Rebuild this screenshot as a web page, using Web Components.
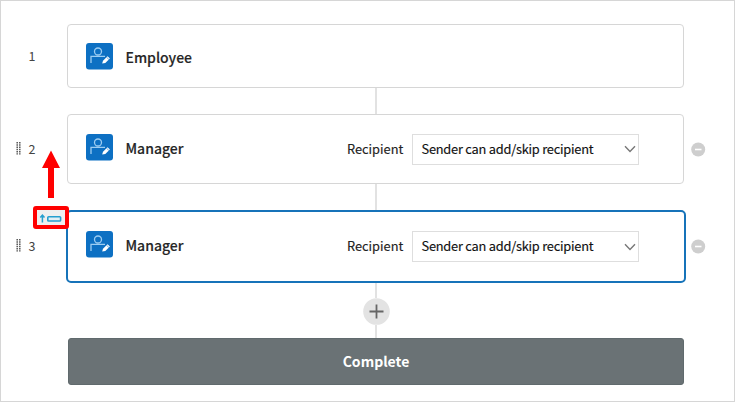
<!DOCTYPE html>
<html lang="en"><head><meta charset="utf-8"><title>Workflow</title>
<style>html,body{margin:0;background:#fff}</style></head><body>
<workflow-board></workflow-board>
<script>
const define=(name,html,setup)=>customElements.define(name,class extends HTMLElement{
  constructor(){super();this.attachShadow({mode:'open'}).innerHTML=html;}
  connectedCallback(){if(setup)setup(this,this.shadowRoot);}
});

define('person-icon',`<style>:host{display:block;width:27px;height:27px}svg{display:block}</style>
<svg width="27" height="27" viewBox="0 0 27 27"><rect width="27" height="26.6" rx="3" fill="#0d70c3"/>
<g fill="none" stroke="#9dcdf2" stroke-width="1.3"><circle cx="12" cy="8.5" r="3.5"/><path d="M5 20V13.3H19"/></g>
<path d="M16.2 20.5L17 17.8L21.5 13.3L23.9 15.5L19.3 20Z" fill="#fff"/><path d="M20.5 14.2L22.9 16.5" stroke="#0d70c3" stroke-width=".6"/></svg>`);

define('drag-grip',`<style>:host{display:block;width:5px;height:13px}svg{display:block}</style>
<svg width="5" height="13" viewBox="0 0 5 13"><g stroke="#555" stroke-width="1.5" stroke-dasharray="1.4 .85"><path d="M1.2 0V12.6M3.8 0V12.6"/></g></svg>`);

define('recipient-select',`<style>:host{display:flex;align-items:center;font-size:12.8px;color:#222}
label{width:64.5px;flex:none}label,span{position:relative;top:-1px;-webkit-text-stroke:.15px currentColor}.box{box-sizing:border-box;width:227px;height:31px;border:1px solid #dedede;display:flex;align-items:center;justify-content:space-between;padding:0 2px 0 9px;color:#111;white-space:nowrap;letter-spacing:-.22px}
span{display:block}svg{display:block}</style>
<label>Recipient</label><div class="box"><span><slot></slot></span><svg width="12" height="8" viewBox="0 0 12 8"><path d="M1 1.3L6 6.4L11 1.3" fill="none" stroke="#777" stroke-width="1.4"/></svg></div>`);

define('step-row',`<style>
:host{display:grid;grid-template-columns:67px 617px 50px;height:var(--h);position:relative;align-items:center}
.gutter{display:grid;grid-template-columns:5px auto;column-gap:8px;padding-left:15.5px;align-items:center;font-size:12.5px;color:#444;line-height:16px}
.num{grid-column:2}
drag-grip{margin-top:-2px}
.card{box-sizing:border-box;height:100%;border:1px solid #d6d6d6;border-radius:4px;display:flex;align-items:center;padding-left:18px;background:#fff}
:host([selected]) .card{border:2px solid #1673b9;margin:-1px -2px -1px -1px;height:calc(100% + 2px);border-radius:5px}
person-icon{margin-right:12.5px;flex:none}.name{font-size:14px;font-weight:500;color:#262626;width:221.5px;flex:none;line-height:20px;-webkit-text-stroke:.15px currentColor}
.name{margin-top:1px}
:host([movable]) .name{margin-top:-3px}
:host([selected]) .name{margin-top:-4px}
:host([movable]) person-icon{margin-top:-3px}
:host([selected]) person-icon{margin-top:-5px}
:host([selected]) .gutter{margin-top:-1px}
.remove{margin-left:7px;display:block}
</style><div class="gutter"></div><div class="card"><person-icon></person-icon><span class="name"></span></div>`,
(el,r)=>{
  const g=r.querySelector('.gutter');
  if(el.hasAttribute('movable'))g.append(document.createElement('drag-grip'));
  const n=document.createElement('span');n.className='num';n.textContent=el.getAttribute('number');g.append(n);
  r.querySelector('.name').textContent=el.getAttribute('name');
  if(el.hasAttribute('recipient')){
    const s=document.createElement('recipient-select');s.textContent=el.getAttribute('recipient');r.querySelector('.card').append(s);
    r.querySelector('.card').insertAdjacentHTML('afterend','<svg class="remove" width="15" height="15" viewBox="0 0 15 15"><circle cx="7.2" cy="7.5" r="7" fill="#cecece"/><path d="M4 7.5H10.5" stroke="#fff" stroke-width="1.6"/></svg>');
  }
});

define('step-link',`<style>:host{display:flex;justify-content:center;height:var(--h,26px);width:617px;margin-left:67.5px}i{display:block;width:2px;background:#e2e2e2}</style><i></i>`);

define('add-step',`<style>:host{display:flex;justify-content:center;align-items:center;width:617px;height:27px;margin-left:67.5px}svg{display:block}</style>
<svg width="27" height="27" viewBox="0 0 27 27"><circle cx="13.5" cy="13.5" r="13.3" fill="#e3e3e3"/><path d="M6.5 13.5H20.5M13.5 6.5V20.5" stroke="#666" stroke-width="1.8"/></svg>`);

define('complete-bar',`<style>:host{box-sizing:border-box;display:flex;align-items:center;justify-content:center;width:616px;height:47px;margin-left:68px;border:1px solid #606a6d;border-radius:3px;background:#6a7275;color:#fff;font-size:14px;font-weight:700;line-height:20px;padding-bottom:2px}</style><slot></slot>`);

define('move-hint',`<style>:host{position:absolute;left:33px;top:150px}svg{display:block}</style>
<svg width="36" height="79" viewBox="0 0 36 79"><path d="M18 .5L27 18H21V48H15V18H9Z" fill="#f00"/>
<rect x="2" y="58" width="32" height="19" rx="1" fill="#efefef" stroke="#f00" stroke-width="4"/>
<path d="M9.4 72.5V65.8M7.3 67.5L9.4 65.2L11.5 67.5" fill="none" stroke="#269fcf" stroke-width="1.5"/>
<rect x="14.8" y="66.7" width="12.8" height="4.3" rx=".8" fill="#e2eff5" stroke="#269fcf" stroke-width="1.6"/></svg>`);

define('workflow-board',`<style>:host{display:block;box-sizing:border-box;position:relative;width:735px;height:402px;border:1px solid #d6d6d6;font-family:"Noto Sans CJK SC","Noto Sans",sans-serif;overflow:hidden}
main{margin:23px 0 0 -1px}.overlay{position:absolute;left:-1px;top:-1px}</style><main>
<step-row number="1" name="Employee" style="--h:64px"></step-row><step-link></step-link>
<step-row number="2" name="Manager" recipient="Sender can add/skip recipient" movable style="--h:70px"></step-row><step-link style="--h:27px"></step-link>
<step-row number="3" name="Manager" recipient="Sender can add/skip recipient" movable selected style="--h:71px"></step-row><step-link style="--h:16px"></step-link>
<add-step></add-step><step-link style="--h:13px"></step-link><complete-bar>Complete</complete-bar></main>
<div class="overlay"><move-hint></move-hint></div>`);
</script></body></html>
